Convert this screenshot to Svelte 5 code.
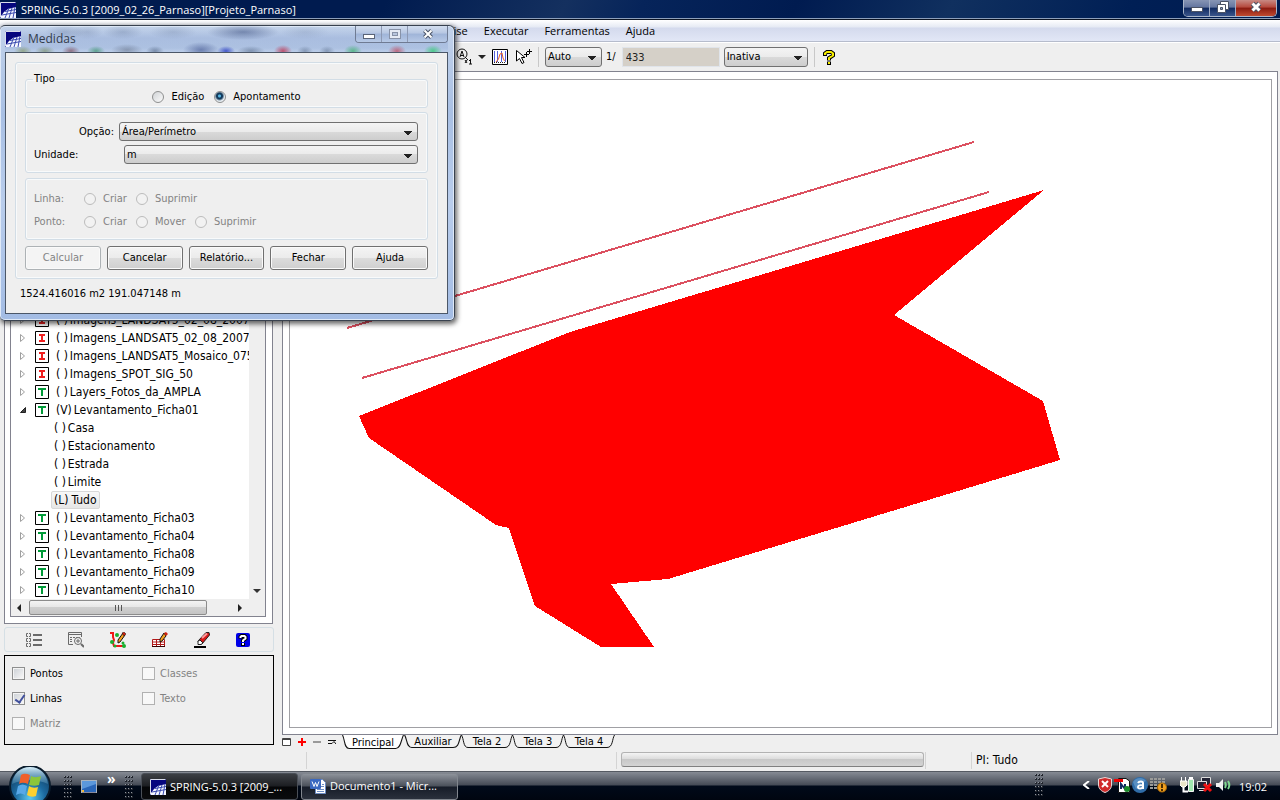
<script>
  const menus = ['Análise', 'Executar', 'Ferramentas', 'Ajuda'];
  const tree = [
    { kind: 'I', mark: '( )', name: 'Imagens_LANDSAT5_02_08_2007_0' },
    { kind: 'I', mark: '( )', name: 'Imagens_LANDSAT5_02_08_2007_0' },
    { kind: 'I', mark: '( )', name: 'Imagens_LANDSAT5_Mosaico_075' },
    { kind: 'I', mark: '( )', name: 'Imagens_SPOT_SIG_50' },
    { kind: 'T', mark: '( )', name: 'Layers_Fotos_da_AMPLA' },
    { kind: 'T', mark: '(V)', name: 'Levantamento_Ficha01', open: true },
    { child: true, mark: '( )', name: 'Casa' },
    { child: true, mark: '( )', name: 'Estacionamento' },
    { child: true, mark: '( )', name: 'Estrada' },
    { child: true, mark: '( )', name: 'Limite' },
    { child: true, mark: '(L)', name: 'Tudo', selected: true },
    { kind: 'T', mark: '( )', name: 'Levantamento_Ficha03' },
    { kind: 'T', mark: '( )', name: 'Levantamento_Ficha04' },
    { kind: 'T', mark: '( )', name: 'Levantamento_Ficha08' },
    { kind: 'T', mark: '( )', name: 'Levantamento_Ficha09' },
    { kind: 'T', mark: '( )', name: 'Levantamento_Ficha10' }
  ];
  const layers = [
    { name: 'Pontos', on: false, off: false },
    { name: 'Classes', on: false, off: true },
    { name: 'Linhas', on: true, off: false },
    { name: 'Texto', on: false, off: true },
    { name: 'Matriz', on: false, off: true }
  ];
  const tabs = ['Auxiliar', 'Tela 2', 'Tela 3', 'Tela 4'];
  const actions = [
    { name: 'Calcular', off: true },
    { name: 'Cancelar' },
    { name: 'Relatório...' },
    { name: 'Fechar' },
    { name: 'Ajuda' }
  ];
</script>

{#snippet appIcon()}
  <svg class="app-icon" viewBox="0 0 16 16" aria-hidden="true">
    <rect width="16" height="16" fill="#06067e" />
    <path d="M1 16V14L4 10L8 7L16 5V16Z" fill="#f4f6ff" />
    <path d="M2 13L16 10.500M5 9.500L16 7.500M5 16L9 6M9 16L12 6M13 16L15 5" stroke="#3a4ab0" stroke-width="1" fill="none" />
    <path d="M0.500 15.500V0.500H15.500" stroke="#d8dcea" fill="none" />
  </svg>
{/snippet}

{#snippet grip()}
  <svg class="grip" viewBox="0 0 8 22" aria-hidden="true">
    {#each [0, 4, 8, 12, 16, 20] as y}
      <path d="M0 {y}h2v2h-2zM3 {y}h2v2h-2zM6 {y}h2v2h-2z" fill="#20242c" />
      <path d="M0 {y}h1v1h-1zM3 {y}h1v1h-1zM6 {y}h1v1h-1z" fill="#8f959e" />
    {/each}
  </svg>
{/snippet}

<div class="screen">
  <header class="titlebar">
    {@render appIcon()}
    <h1>SPRING-5.0.3 [2009_02_26_Parnaso][Projeto_Parnaso]</h1>
    <div class="win-buttons main-buttons">
      <button aria-label="Minimizar">
        <svg viewBox="0 0 12 12"><rect x="0.500" y="6.500" width="11" height="4" fill="#fff" stroke="#4b5365" /></svg>
      </button>
      <button aria-label="Restaurar">
        <svg viewBox="0 0 12 12">
          <path d="M3.500 0.500H11.500V8.500H3.500Z" fill="#fff" stroke="#4b5365" />
          <path d="M0.500 3.500H8.500V11.500H0.500Z" fill="#fff" stroke="#4b5365" />
          <path d="M3.500 6.500H5.500V8.500H3.500Z" fill="#8fa0bd" stroke="#4b5365" />
        </svg>
      </button>
      <button class="close" aria-label="Fechar janela">
        <svg viewBox="0 0 12 12">
          <path d="M2.500 2.500L9.500 9.500M9.500 2.500L2.500 9.500" stroke="#4b5365" stroke-width="5" />
          <path d="M2.500 2.500L9.500 9.500M9.500 2.500L2.500 9.500" stroke="#fff" stroke-width="3" />
        </svg>
      </button>
    </div>
  </header>

  <nav class="menubar">
    {#each menus as m}<button>{m}</button>{/each}
  </nav>

  <div class="toolbar">
    <button class="tool" aria-label="Escala 1:1">
      <svg width="17" height="18" viewBox="0 0 17 18" fill="none" stroke="#111">
        <circle cx="6" cy="6" r="5" />
        <path d="M4 9L6 3L8 9M4.500 7.500H7.500M9 9L12 12" />
        <path d="M9 12L11 15M11 12L9 15M14.500 11V16M13 12.500H14.500M13 16H16" />
      </svg>
    </button>
    <button class="tool drop" aria-label="Mais opções">
      <svg width="8" height="4" viewBox="0 0 8 4"><path d="M0 0H8L4 4Z" fill="#222" /></svg>
    </button>
    <button class="tool hist" aria-label="Contraste">
      <svg width="16" height="16" viewBox="0 0 16 16">
        <path d="M0.500 0.500H15.500V15.500H0.500Z" fill="#fff" stroke="#000" />
        <path d="M2.500 2V13M5.500 2V13M9.500 2V13M13.500 2V13" stroke="#5560dc" />
        <path d="M4 13L6.500 10L8 5L10 4L11 9L12.500 12" stroke="#e8602c" fill="none" />
        <path d="M2 13.500H14" stroke="#222" stroke-dasharray="1 1" />
      </svg>
    </button>
    <button class="tool" aria-label="Cursor">
      <svg width="16" height="16" viewBox="0 0 16 16">
        <path d="M0.500 1.500V12L3.500 9.500L6 14.500L8 13.500L5.500 8.500H9Z" fill="#fff" stroke="#000" />
        <path d="M8 5.500H13M10.500 3V8M11 2.500H16M13.500 0V5" stroke="#000" />
      </svg>
    </button>
    <span class="sep"></span>
    <select class="combo auto" aria-label="Escala"><option>Auto</option></select>
    <label class="ratio" for="scale">1/</label>
    <input id="scale" class="scale" value="433" disabled />
    <select class="combo inativa" aria-label="Modo"><option>Inativa</option></select>
    <span class="sep"></span>
    <button class="tool help" aria-label="Ajuda rápida">
      <svg width="12" height="15" viewBox="0 0 12 15">
        <path d="M2 6V3.500L4 2H8L10 3.500V5.500L6 8V10.500M6 11.500V15" fill="none" stroke="#000" stroke-width="4" />
        <path d="M2 5V3.500L4 2H8L10 3.500V5.500L6 8V10M6 12V14" fill="none" stroke="#f8ee00" stroke-width="2" />
      </svg>
    </button>
  </div>

  <main class="workspace">
    <aside class="side">
      <div class="tree-frame">
        <div class="tree-box">
          <div class="tree-main">
            <ul class="tree">
              {#each tree as n}
                <li class:child={n.child}>
                  {#if !n.child}
                    <svg class="arrow" viewBox="0 0 8 10" aria-hidden="true">
                      {#if n.open}
                        <path d="M6.500 2.500V7.500H1.500Z" fill="#444" stroke="#222" />
                      {:else}
                        <path d="M1.500 1.500L5.500 5L1.500 8.500Z" fill="#fff" stroke="#a0a0a0" />
                      {/if}
                    </svg>
                    <svg class="kind" viewBox="0 0 14 14" aria-hidden="true">
                      <path d="M0.500 0.500H13.500V13.500H0.500Z" fill="#fff" stroke="#000" />
                      {#if n.kind === 'I'}
                        <path d="M4 4H10M4 10H10M7 3V11" stroke="#f02020" stroke-width="2" />
                      {:else}
                        <path d="M3 4H11M7 3V11" stroke="#009a38" stroke-width="2" />
                      {/if}
                    </svg>
                  {/if}
                  <span class="node" class:selected={n.selected}><span>{n.mark}</span><span>{n.name}</span></span>
                </li>
              {/each}
            </ul>
            <div class="vscroll">
              <svg width="8" height="4" viewBox="0 0 8 4"><path d="M0 0H8L4 4Z" fill="#333" /></svg>
            </div>
          </div>
          <div class="hscroll">
            <svg width="4" height="8" viewBox="0 0 4 8"><path d="M4 0V8L0 4Z" fill="#222" /></svg>
            <div class="thumb">
              <svg width="9" height="6" viewBox="0 0 9 6"><path d="M1.500 0V6M4.500 0V6M7.500 0V6" stroke="#555" /></svg>
            </div>
            <svg width="4" height="8" viewBox="0 0 4 8"><path d="M0 0V8L4 4Z" fill="#222" /></svg>
          </div>
        </div>
      </div>

      <div class="tools">
        <button class="tool" aria-label="Lista">
          <svg width="16" height="14" viewBox="0 0 16 14" stroke="#6a6a6a" fill="none">
            <path d="M7 2H16M7 7H16M7 12H16" stroke-width="2" />
            <path d="M2 0.500H0.500V3.500H2M3 0.500H4.500V3.500H3M2 5.500H0.500V8.500H2M3 5.500H4.500V8.500H3M2 10.500H0.500V13.500H2M3 10.500H4.500V13.500H3" />
          </svg>
        </button>
        <button class="tool" aria-label="Consultar tabela">
          <svg width="16" height="16" viewBox="0 0 16 16" stroke="#6a6a6a" fill="none">
            <path d="M5 12.500H0.500V0.500H13.500V5M0 2.500H14" />
            <path d="M2 5.500H12M2 7.500H5M2 9.500H5" stroke-dasharray="2 1" />
            <circle cx="10" cy="9" r="3.500" fill="#f4f4f4" />
            <path d="M8 9H12M10 7V11" />
            <path d="M13 12L16 15" stroke-width="2" />
          </svg>
        </button>
        <button class="tool" aria-label="Editar vetores">
          <svg width="16" height="16" viewBox="0 0 16 16">
            <path d="M0 1H3V5L4 8L3 11L4 14H13" fill="none" stroke="#f01818" stroke-width="2" />
            <path d="M13 1L8 8V11L10 10L15 3Z" fill="#f5a020" stroke="#111" />
            <path d="M12 1L14 0L16 2L14 4Z" fill="#d02010" stroke="#111" stroke-width="0.500" />
            <circle cx="7" cy="3" r="2" fill="#18b030" /><circle cx="2" cy="10" r="2" fill="#18b030" />
            <circle cx="13" cy="11" r="1.500" fill="#18b030" /><circle cx="14" cy="14" r="2" fill="#18b030" />
            <circle cx="5" cy="14" r="1.500" fill="#18b030" />
          </svg>
        </button>
        <button class="tool" aria-label="Editar matriz">
          <svg width="16" height="16" viewBox="0 0 16 16">
            <path d="M0.500 7.500H12.500V14.500H0.500Z" fill="#fff" stroke="#b01818" />
            <path d="M0 10H13M0 12.500H13M4.500 7V15M8.500 7V15" stroke="#b01818" />
            <path d="M0 14.500H13" fill="none" stroke="#300" />
            <path d="M12 1L8 7V10L10 9L14 4Z" fill="#f5a020" stroke="#111" />
            <path d="M12 1L14 0L16 2L14 4Z" fill="#d02010" />
          </svg>
        </button>
        <button class="tool" aria-label="Borracha">
          <svg width="16" height="16" viewBox="0 0 16 16">
            <path d="M4 9L12 0.500H15L15.500 3L8 12H5Z" fill="#d81818" stroke="#222" />
            <path d="M4 9L6 8L9 11L7 12.500H4Z" fill="#fff" stroke="#222" />
            <path d="M8 6L13 1.500" stroke="#ff9a9a" stroke-width="2" />
            <path d="M0 15H12" stroke="#000" stroke-width="2" />
          </svg>
        </button>
        <button class="tool" aria-label="Ajuda do painel">
          <svg width="14" height="14" viewBox="0 0 14 14">
            <rect width="14" height="14" rx="2" fill="#0000e8" />
            <path d="M4.500 5.500V4L5.500 3H8.500L9.500 4V5.500L7 7.500V9M7 10V13" fill="none" stroke="#000" stroke-width="4" />
            <path d="M4.500 5V4L5.500 3H8.500L9.500 4V5.500L7 7.500V9M7 10V12" fill="none" stroke="#fff" stroke-width="2" />
          </svg>
        </button>
      </div>

      <div class="layers">
        {#each layers as l}
          <label class:off={l.off}>
            <input type="checkbox" checked={l.on} disabled={l.off} />{l.name}
          </label>
        {/each}
      </div>
    </aside>

    <section class="view">
      <div class="view-frame">
        <div class="canvas">
          <svg viewBox="290 80 981 647" aria-label="Desenho da área" shape-rendering="crispEdges">
            <path d="M1044 190L894 315L1043 401L1060 460L668 579L611 584L654 647H601L535 606L509 528L496 525L369 438L359 416L570 332Z" fill="#f00" />
            <path d="M347 328L974 142M362 378L989 192" stroke="#dc5060" stroke-width="2" fill="none" />
          </svg>
        </div>
      </div>
      <div class="tabs">
        <button class="mini" aria-label="Janela">
          <svg width="9" height="8" viewBox="0 0 9 8"><path d="M0.500 0.500H8.500V7.500H0.500ZM0 1.500H9" fill="#fff" stroke="#444" /></svg>
        </button>
        <button class="mini" aria-label="Adicionar">
          <svg width="8" height="8" viewBox="0 0 8 8"><path d="M0 4H8M4 0V8" stroke="#f00" stroke-width="2" /></svg>
        </button>
        <button class="mini" aria-label="Remover">
          <svg width="8" height="8" viewBox="0 0 8 8"><path d="M0 4H8" stroke="#999" stroke-width="2" /></svg>
        </button>
        <button class="mini" aria-label="Renomear">
          <svg width="8" height="8" viewBox="0 0 8 8"><path d="M0 2.500H8M0 5.500H4M4 5.500L6 3.500L8 6" stroke="#111" fill="none" /></svg>
        </button>
        <button class="tab active">
          <svg viewBox="0 0 60 15" preserveAspectRatio="none"><path d="M0.500 0C3 5 2 13.500 7 13.500H52C57 13.500 57 5 59.500 0" fill="#fff" stroke="#111" /></svg>
          <span>Principal</span>
        </button>
        {#each tabs as t, i}
          <button class="tab" class:wide={i === 0}>
            <svg viewBox="0 0 52 14" preserveAspectRatio="none"><path d="M0.500 0C3 4 2 12.500 7 12.500H44C50 12.500 49 4 51.500 0" fill="#f2f2f2" stroke="#111" /></svg>
            <span>{t}</span>
          </button>
        {/each}
      </div>
    </section>
  </main>

  <footer class="status">
    <span class="cell first"></span>
    <span class="cell progress-cell"><span class="progress"></span></span>
    <span class="cell gap"></span>
    <span class="cell">PI: Tudo</span>
  </footer>

  <div class="taskbar">
    <button class="start" aria-label="Iniciar">
      <svg width="46" height="35" viewBox="0 0 46 35">
        <defs>
          <radialGradient id="orb" cx="50%" cy="80%" r="75%">
            <stop offset="0" stop-color="#5cc8f0" /><stop offset="0.5" stop-color="#1c6aa0" /><stop offset="1" stop-color="#123a5c" />
          </radialGradient>
          <linearGradient id="shine" x1="0" y1="0" x2="0" y2="1">
            <stop offset="0" stop-color="#d8f0fb" /><stop offset="1" stop-color="#5d9cc0" stop-opacity="0.400" />
          </linearGradient>
        </defs>
        <circle cx="23" cy="20" r="20" fill="url(#orb)" stroke="#0b1c2c" stroke-width="2" />
        <path d="M5 18C6 8 13 1 23 1S40 8 41 18C30 13 16 13 5 18Z" fill="url(#shine)" />
        <path d="M14 9C17 7 20 8 23 9L21 18C18 17 15 16 12 18Z" fill="#f0602c" />
        <path d="M24 10C28 12 31 11 34 10L32 19C29 20 26 20 22 19Z" fill="#8cc63a" />
        <path d="M11 20C14 18 17 18 20 20L18 29C15 27 12 27 9 29Z" fill="#58a8e8" />
        <path d="M22 20C25 22 28 22 31 21L29 30C26 31 23 31 20 29Z" fill="#fcd030" />
      </svg>
    </button>
    {@render grip()}
    <button class="quick" aria-label="Mostrar área de trabalho">
      <svg width="16" height="14" viewBox="0 0 16 14">
        <rect x="0.500" y="0.500" width="15" height="12" fill="#2a66b8" stroke="#aab4c0" />
        <path d="M1 1H15V4L1 9Z" fill="#5c98dc" />
        <path d="M1 12.500H15" stroke="#889" /><rect x="1" y="10" width="2" height="2" fill="#f0b838" />
      </svg>
    </button>
    <span class="chev">»</span>
    {@render grip()}
    <button class="task current">{@render appIcon()}<span>SPRING-5.0.3 [2009_...</span></button>
    <button class="task">
      <svg class="word" viewBox="0 0 16 16" aria-hidden="true">
        <path d="M5.500 1.500H12.500L15.500 4.500V15.500H5.500Z" fill="#fff" stroke="#6c8cc4" />
        <path d="M12 6.500H14M11 8.500H14M7 11.500H14M7 13.500H14" stroke="#6c8cc4" />
        <rect y="1" width="11" height="10" rx="1" fill="#3a68c0" />
        <path d="M2 3.500L4 8.500L5.500 4.500L7 8.500L9 3.500" fill="none" stroke="#fff" stroke-width="1" />
      </svg>
      <span>Documento1 - Micr...</span>
    </button>
    <div class="tray">
      {@render grip()}
      <svg class="less" width="7" height="8" viewBox="0 0 7 8"><path d="M6 0L1 4L6 8" fill="none" stroke="#fff" stroke-width="2" /></svg>
      <svg width="14" height="16" viewBox="0 0 14 16">
        <path d="M7 0.500L13.500 2V8C13.500 12 10 14.500 7 15.500C4 14.500 0.500 12 0.500 8V2Z" fill="#d02a2a" stroke="#e8d8d8" />
        <path d="M4 4L10 10M10 4L4 10" stroke="#fff" stroke-width="2" />
      </svg>
      <svg width="16" height="16" viewBox="0 0 16 16">
        <path d="M4.500 1.500H12L15.500 4V15.500H4.500Z" fill="#fff" stroke="#111" />
        <path d="M0 3.500H9" stroke="#e00" stroke-width="3" />
        <path d="M7 12V7L11 12V7" fill="none" stroke="#112a60" stroke-width="2" />
        <circle cx="13" cy="12" r="3" fill="#1a8a2a" />
      </svg>
      <svg width="16" height="16" viewBox="0 0 16 16">
        <circle cx="8" cy="8" r="8" fill="#2f6ca8" />
        <path d="M1 5C4 0 11 0 14 4L10 6L4 12Z" fill="#7fb0dc" opacity="0.500" />
        <path d="M6 6C7 4 11 4 11 6V12M11 8C7 8 6 9 6 10C6 12 10 12 11 10" fill="none" stroke="#fff" stroke-width="2" />
      </svg>
      <svg width="17" height="16" viewBox="0 0 17 16">
        <path d="M0 2H16M0 5H16M0 8H16M0 11H12" stroke="#9a9a98" stroke-width="2" stroke-dasharray="3 1" />
        <circle cx="12" cy="10.500" r="4.500" fill="#f0a020" stroke="#a86808" />
        <path d="M12 7V11M12 12V14" stroke="#4a2c00" stroke-width="2" />
      </svg>
      <svg class="power" width="15" height="16" viewBox="0 0 15 16">
        <path d="M8.500 2.500H13.500V14.500H8.500Z" fill="#a0e8b0" stroke="#f4f4f4" />
        <path d="M9 1H13" stroke="#fff" stroke-width="2" />
        <path d="M1.500 0V4M5.500 0V4" stroke="#fff" />
        <path d="M0 4H7V8L5 10H2L0 8Z" fill="#e8e4c8" stroke="#fff" />
        <path d="M3.500 10V14.500H8" fill="none" stroke="#fff" stroke-width="2" />
      </svg>
      <svg width="16" height="16" viewBox="0 0 16 16">
        <path d="M4.500 0.500H13.500V8.500H4.500Z" fill="#223" stroke="#ddd" />
        <path d="M0.500 4.500H9.500V11.500H0.500ZM2 13.500H9" fill="#223" stroke="#ddd" />
        <path d="M7 7L14 14M14 7L7 14" stroke="#f01010" stroke-width="3" />
      </svg>
      <svg class="sound" width="15" height="14" viewBox="0 0 15 14">
        <path d="M0 5H3L7 1V13L3 9H0Z" fill="#f0f0f0" />
        <path d="M9 4C10 6 10 8 9 10M12 3C14 6 14 8 12 11" fill="none" stroke="#7fd890" stroke-width="2" />
      </svg>
      <time>19:02</time>
    </div>
  </div>

  <section class="dialog" aria-label="Medidas">
    <div class="dialog-title">
      {@render appIcon()}
      <h2>Medidas</h2>
      <div class="win-buttons dialog-buttons">
        <button aria-label="Minimizar Medidas">
          <svg viewBox="0 0 12 12"><rect x="0.500" y="6.500" width="11" height="4" fill="#fff" stroke="#5a6478" /></svg>
        </button>
        <button aria-label="Maximizar Medidas">
          <svg viewBox="0 0 12 12">
            <rect x="0.500" y="1.500" width="11" height="9" fill="#e4eaf4" stroke="#8792a8" />
            <rect x="3.500" y="4.500" width="5" height="3" fill="#b8c6de" stroke="#8792a8" />
          </svg>
        </button>
        <button class="close" aria-label="Fechar Medidas">
          <svg viewBox="0 0 12 12">
            <path d="M2.500 2.500L9.500 9.500M9.500 2.500L2.500 9.500" stroke="#4a5468" stroke-width="4" />
            <path d="M2.500 2.500L9.500 9.500M9.500 2.500L2.500 9.500" stroke="#fff" stroke-width="2" />
          </svg>
        </button>
      </div>
    </div>
    <div class="dialog-body">
      <div class="group outer">
        <fieldset class="group type">
          <legend>Tipo</legend>
          <label><input type="radio" name="tipo" />Edição</label>
          <label><input type="radio" name="tipo" checked />Apontamento</label>
        </fieldset>
        <div class="group options">
          <div class="field">
            <label for="opcao" class="right">Opção:</label>
            <select id="opcao" class="combo"><option>Área/Perímetro</option></select>
          </div>
          <div class="field unit">
            <label for="unidade">Unidade:</label>
            <select id="unidade" class="combo"><option>m</option></select>
          </div>
        </div>
        <div class="group edit">
          <div class="radios">
            <span>Linha:</span>
            <label class="w52"><input type="radio" name="linha" disabled />Criar</label>
            <label><input type="radio" name="linha" disabled />Suprimir</label>
          </div>
          <div class="radios">
            <span>Ponto:</span>
            <label class="w52"><input type="radio" name="ponto" disabled />Criar</label>
            <label class="w59"><input type="radio" name="ponto" disabled />Mover</label>
            <label><input type="radio" name="ponto" disabled />Suprimir</label>
          </div>
        </div>
        <div class="actions">
          {#each actions as a}<button disabled={a.off}>{a.name}</button>{/each}
        </div>
      </div>
      <output>1524.416016 m2 191.047148 m</output>
    </div>
  </section>
</div>

<style>
  :global(body) { margin: 0; background: #efefef; }
  .screen {
    --ui: 'DejaVu Sans Condensed', 'DejaVu Sans', sans-serif;
    --segoe: 'Open Sans', 'Noto Sans', sans-serif;
    position: relative;
    display: flex;
    flex-direction: column;
    min-height: 100vh;
    overflow: hidden;
    background: #efefef;
    color: #000;
    font: 11px/14px var(--ui);
  }
  .screen * { box-sizing: border-box; }
  h1, h2, ul { margin: 0; padding: 0; }
  h1, h2 { font: inherit; }
  svg { display: block; flex: none; }
  button { font: inherit; color: inherit; border: 0; background: none; padding: 0; }
  .app-icon { width: 16px; height: 16px; }

  .titlebar {
    display: flex;
    align-items: center;
    gap: 5px;
    height: 20px;
    border-bottom: 1px solid #0c1422;
    box-shadow: inset 0 -1px #8d9fba;
    background: linear-gradient(115deg, #001b4f 0 30%, #14305f 44%, #06245a 50%, #001b50 62%, #10305f 74%, #001f55 88%, #001b4f);
    color: #fff;
    font: 11px/18px var(--segoe);
    white-space: nowrap;
  }
  .win-buttons { display: flex; align-self: flex-start; margin-left: auto; overflow: hidden; }
  .win-buttons button { display: grid; place-items: center; width: 26px; height: 100%; }
  .win-buttons svg { width: 12px; height: 12px; }
  .main-buttons { width: 94px; height: 17px; margin-right: 3px; border: 1px solid #aab6ca; border-top: 0; border-radius: 0 0 5px 5px; }
  .main-buttons button { padding-bottom: 2px; background: linear-gradient(#8795b4, #6476a0 45%, #102a60 50%, #3a568c); border-right: 1px solid #a0adc4; }
  .main-buttons .close { flex: 1; background: linear-gradient(#c88a84, #b5483c 45%, #8a1a10 50%, #c04a30); border-right: 0; }

  .menubar {
    display: flex;
    align-items: center;
    gap: 16px;
    height: 22px;
    padding-left: 431px;
    border-bottom: 1px solid #b6bccc;
    background: linear-gradient(#fff, #e6eaf4 7px, #d4daed 8px, #e2e7f6);
    font: 11px/16px var(--segoe);
  }

  .toolbar {
    display: flex;
    align-items: center;
    height: 29px;
    padding-left: 456px;
    border-top: 1px solid #fff;
    background: #efefef;
  }
  .tool { display: grid; place-items: center; }
  .drop { margin: 0 6px 0 5px; }
  .hist { margin-right: 8px; }
  .sep { width: 1px; height: 20px; margin: 0 6px; background: #c8c8c8; }
  .combo {
    appearance: none;
    height: 20px;
    padding: 0 2px;
    border: 1px solid #707070;
    border-radius: 3px;
    color: #000;
    font: inherit;
    background:
      linear-gradient(#222, #222) right 8px top 11px / 2px 1px no-repeat,
      linear-gradient(#222, #222) right 7px top 10px / 4px 1px no-repeat,
      linear-gradient(#222, #222) right 6px top 9px / 6px 1px no-repeat,
      linear-gradient(#222, #222) right 5px top 8px / 8px 1px no-repeat,
      linear-gradient(#f4f4f4, #ebebeb 50%, #dadada 50%, #cdcdcd);
  }
  .auto { width: 57px; }
  .ratio { margin: 0 6px 0 4px; }
  .scale { width: 98px; height: 20px; padding: 0 3px; border: 1px solid #e0e4ea; background: #d5d0c8; color: #222; font: inherit; }
  .inativa { width: 84px; margin-left: 4px; }
  .help { margin-left: 2px; }

  .workspace { flex: 1; display: grid; grid-template-columns: 282px minmax(0, 1fr); min-height: 0; }
  .side { display: flex; flex-direction: column; padding: 0 8px 5px 4px; min-height: 0; }
  .tree-frame { flex: 1 1 0; display: flex; margin-right: 1px; padding: 6px 6px 6px 5px; border: 1px solid #82838f; background: #fff; min-height: 0; }
  .tree-box { flex: 1; display: flex; flex-direction: column; border: 1px solid #82838f; min-width: 0; }
  .tree-main { flex: 1; display: flex; min-height: 0; }
  .tree { flex: 1; display: flex; flex-direction: column; justify-content: flex-end; overflow: hidden; list-style: none; font-size: 12px; line-height: 16px; white-space: nowrap; }
  .tree li { display: flex; align-items: center; height: 18px; flex: none; padding-left: 8px; }
  .tree li.child { padding-left: 40px; }
  .arrow { width: 8px; height: 10px; margin-right: 8px; }
  .kind { width: 14px; height: 14px; margin-right: 4px; }
  .node { display: flex; gap: 2px; padding: 0 2px; border: 1px solid transparent; border-radius: 2px; }
  .selected { gap: 3px; border-color: #d8d8d8; background: linear-gradient(#f8f8f8, #e6e6e6); }
  .vscroll { display: flex; align-items: flex-end; justify-content: center; width: 16px; padding-bottom: 6px; background: #efefef; }
  .hscroll { display: flex; align-items: center; height: 17px; padding: 0 23px 0 6px; background: #efefef; }
  .thumb { flex: 0 1 178px; display: grid; place-items: center; height: 15px; margin: 0 auto 0 8px; border: 1px solid #8c8c8c; border-radius: 2px; background: linear-gradient(#f4f4f4, #e6e6e6 50%, #cfcfcf 50%, #c4c4c4); }
  .tools { display: flex; align-items: center; height: 25px; margin: 3px 0 3px; padding: 0 23px 0 21px; justify-content: space-between; border: 1px solid #d5dfe5; border-radius: 3px; }
  .layers { display: grid; grid-template-columns: 130px 1fr; grid-auto-rows: 25px; align-items: center; height: 90px; padding: 5px 7px; border: 1px solid #000; }
  .layers label { display: flex; align-items: center; gap: 5px; }
  .off { color: #838383; }
  .layers input { appearance: none; width: 13px; height: 13px; margin: 0; border: 1px solid #8e8f8f; background: linear-gradient(135deg, #cfd3d8, #f6f6f6) content-box, #f4f4f4; padding: 1px; }
  .layers input:disabled { border-color: #b1b1b1; background: #f8f8f8; }
  .layers input:checked::before { content: ''; display: block; width: 4px; height: 8px; margin-left: 3px; margin-top: -1px; border: solid #41509c; border-width: 0 2px 2px 0; transform: rotate(35deg); }

  .view { display: flex; flex-direction: column; min-height: 0; }
  .view-frame { flex: 1; display: flex; margin-right: 2px; padding: 7px 5px 6px 6px; border: 1px solid #82838f; background: #fff; min-height: 0; }
  .canvas { flex: 1; display: flex; border: 1px solid #a0a0a4; min-width: 0; min-height: 0; }
  .canvas svg { flex: 1; min-width: 0; min-height: 0; }
  .tabs { display: flex; align-items: flex-start; height: 15px; }
  .mini { width: 9px; height: 13px; display: grid; place-items: center; margin-right: 6px; }
  .tab { display: grid; place-items: center; width: 52px; height: 14px; margin-right: -1px; }
  .tab svg { grid-area: 1 / 1; width: 100%; height: 14px; }
  .tab span { grid-area: 1 / 1; }
  .tab.wide { width: 58px; }
  .tab.active { width: 62px; height: 15px; margin-right: 0; }
  .tab.active svg { height: 15px; }

  .status { display: flex; align-items: center; height: 21px; font-size: 12px; }
  .cell { height: 17px; padding-left: 4px; border-left: 1px solid #d4d4d4; line-height: 16px; }
  .first { flex: 0 0 310px; margin-left: 306px; }
  .progress-cell { flex: 0 0 309px; }
  .progress { display: block; width: 303px; height: 15px; border: 1px solid #b2b2b2; border-bottom-color: #808080; border-radius: 3px; background: linear-gradient(#f4f4f4, #dcdcdc 45%, #c8c8c8 50%, #d4d4d4); }
  .gap { flex: 0 0 46px; }

  .taskbar {
    position: relative;
    display: flex;
    align-items: center;
    height: 30px;
    padding-left: 64px;
    border-top: 1px solid #555a62;
    background: linear-gradient(#868b94, #454b56 13px, #000a1a 14px, #00050f);
    color: #fff;
    font: 11px/14px var(--segoe);
    white-space: nowrap;
  }
  .start { position: absolute; left: 7px; bottom: 0; }
  .grip { width: 8px; height: 22px; }
  .quick { margin: 0 12px 0 9px; }
  .chev { width: 9px; margin: -16px 9px 0 -2px; font-weight: 700; font-size: 14px; }
  .task { display: flex; align-items: center; gap: 4px; width: 157px; height: 27px; margin-left: 3px; padding: 0 8px 2px; border: 1px solid #81868e; border-radius: 3px; background: linear-gradient(#8d929a, #4b515b 48%, #161c28 52%, #2a303c); }
  .task.current { margin-left: 8px; padding-bottom: 0; border-color: #4a4f57; background: linear-gradient(#3c3f44, #1c1e22 48%, #050608 52%, #0a0b0d); }
  .word { width: 16px; height: 16px; }
  .tray { display: flex; align-items: center; gap: 2px; margin-left: auto; padding: 0 13px 4px 0; }
  .less { margin: 0 6px 0 38px; }
  .power { margin-left: 11px; }
  .sound { margin-left: 1px; }
  time { margin: 4px 0 0 6px; }

  .dialog {
    position: absolute;
    left: 0;
    top: 25px;
    width: 455px;
    padding: 0 6px 6px 5px;
    border: 1px solid #39424f;
    border-left: 0;
    border-radius: 5px 6px 5px 5px;
    background: linear-gradient(#c2d2ea, #a9c0e4 30%, #b9cdec 60%, #a3bce4);
    box-shadow: inset 0 0 0 1px #dfe9f7, 1px 2px 5px 1px rgba(0, 0, 0, 0.6);
  }
  .dialog-title {
    display: flex;
    align-items: center;
    gap: 7px;
    height: 26px;
    color: #333c4c;
    font: 12px/16px var(--segoe);
    background:
      radial-gradient(20px 7px at 60px 6px, rgba(70, 90, 130, 0.25), transparent),
      radial-gradient(16px 7px at 82px 6px, rgba(70, 90, 130, 0.2), transparent),
      radial-gradient(20px 7px at 118px 6px, rgba(70, 90, 130, 0.25), transparent),
      radial-gradient(24px 7px at 168px 6px, rgba(70, 90, 130, 0.2), transparent),
      radial-gradient(36px 8px at 238px 6px, rgba(50, 70, 120, 0.5), transparent),
      radial-gradient(24px 7px at 300px 6px, rgba(70, 90, 130, 0.15), transparent),
      radial-gradient(9px 5px at 18px 25px, rgba(110, 130, 50, 0.5), transparent),
      radial-gradient(10px 5px at 40px 25px, rgba(100, 120, 60, 0.5), transparent),
      radial-gradient(9px 5px at 66px 25px, rgba(110, 40, 50, 0.55), transparent),
      radial-gradient(9px 5px at 91px 25px, rgba(20, 130, 70, 0.55), transparent),
      radial-gradient(16px 6px at 122px 24px, rgba(70, 80, 100, 0.4), transparent),
      radial-gradient(9px 5px at 150px 25px, rgba(60, 80, 110, 0.5), transparent),
      radial-gradient(18px 8px at 196px 24px, rgba(60, 80, 140, 0.6), transparent),
      radial-gradient(9px 5px at 221px 25px, rgba(20, 40, 190, 0.7), transparent),
      radial-gradient(14px 5px at 246px 25px, rgba(60, 80, 110, 0.45), transparent),
      radial-gradient(9px 6px at 278px 25px, rgba(190, 30, 60, 0.7), transparent),
      radial-gradient(8px 5px at 300px 25px, rgba(60, 80, 110, 0.4), transparent),
      radial-gradient(8px 5px at 322px 25px, rgba(60, 80, 110, 0.4), transparent),
      radial-gradient(9px 6px at 348px 25px, rgba(30, 170, 80, 0.6), transparent),
      radial-gradient(9px 6px at 392px 25px, rgba(190, 40, 60, 0.6), transparent),
      radial-gradient(9px 6px at 428px 25px, rgba(30, 200, 100, 0.7), transparent),
      linear-gradient(transparent 2px, rgba(130, 155, 205, 0.35) 12px, rgba(150, 175, 215, 0.4) 22px, transparent);
  }
  .dialog-buttons { width: 93px; height: 17px; border: 1px solid #6f7b93; border-top: 0; border-radius: 0 0 4px 4px; }
  .dialog-buttons button { border-right: 1px solid #8d99b3; background: linear-gradient(#d3deef, #b6c6e2 45%, #9fb4d8 50%, #b7c9e6); }
  .dialog-buttons .close { flex: 1; border-right: 0; }
  .dialog-body { padding: 9px; border: 1px solid #4b5768; background: #efefef; }
  .group { margin: 0; border: 1px solid #d2dde6; border-radius: 3px; box-shadow: inset 0 0 0 1px #f8fafb; }
  .outer { padding: 9px; min-width: 0; height: 217px; }
  .type { display: flex; justify-content: center; gap: 10px; height: 36px; padding: 0; min-width: 0; }
  .type legend { margin-left: 7px; padding: 0 1px; }
  .type label, .radios label { display: flex; align-items: center; gap: 7px; }
  .type input, .radios input { appearance: none; flex: none; width: 12px; height: 12px; margin: 0; border: 1px solid #8e8f8f; border-radius: 50%; background: linear-gradient(135deg, #d0d3d6, #fbfbfb); }
  .type input:checked { background: radial-gradient(circle at 45% 40%, #58b8e4 0 1px, #123a5c 2px 3px, #e8eef2 5px); }
  .radios input:disabled { border-color: #bcbcbc; background: #f2f2f2; }
  .options { height: 61px; margin-top: 4px; padding: 9px 9px 7px 8px; }
  .field { display: grid; grid-template-columns: 80px 1fr; column-gap: 5px; align-items: center; height: 19px; margin-bottom: 4px; }
  .field.unit { grid-template-columns: 85px 1fr; }
  .right { text-align: right; }
  .options .combo { width: 100%; height: 19px; }
  .edit { height: 62px; margin-top: 5px; padding: 8px 8px 6px; color: #838383; }
  .radios { display: flex; align-items: center; height: 23px; }
  .radios span { width: 50px; }
  .w52 { width: 52px; }
  .w59 { width: 59px; }
  .actions { display: grid; grid-template-columns: repeat(5, 1fr); gap: 6px; margin-top: 6px; }
  .actions button { height: 24px; border: 1px solid #707070; border-radius: 3px; background: linear-gradient(#f4f4f4, #ebebeb 50%, #dcdcdc 50%, #cfcfcf); box-shadow: inset 0 0 0 1px #fafafa; }
  .actions button:disabled { border-color: #adb2b5; background: #f4f4f4; color: #838383; }
  output { display: block; padding: 8px 0 3px 5px; }
</style>
